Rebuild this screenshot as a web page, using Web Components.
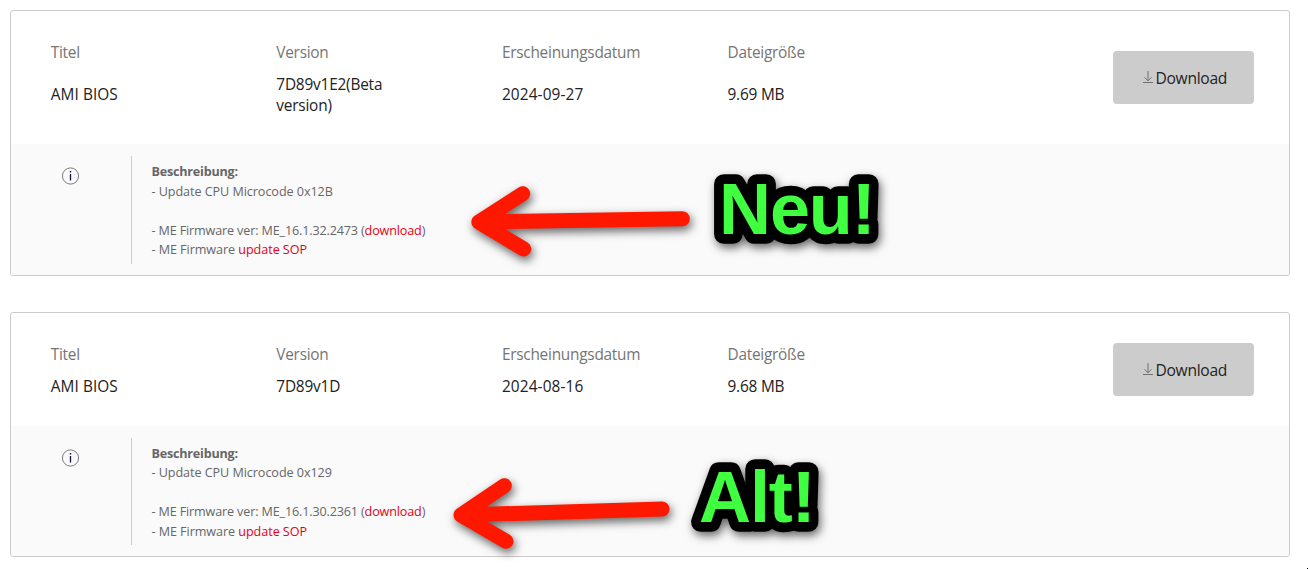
<!DOCTYPE html>
<html lang="de">
  <head>
    <meta charset="UTF-8" />
    <meta name="viewport" content="width=device-width, initial-scale=1.0" />
    <title>BIOS Downloads</title>
    <style>
      body {
        margin: 0;
        height: 569px;
        position: relative;
        overflow: hidden;
        background: #fff;
        font-family: "Open Sans", "Noto Sans", sans-serif;
      }
      bios-field[label="Titel"] {
        --value-track: 0.08px;
      }
      bios-field[label="Version"] {
        --value-track: -0.2px;
      }
      bios-field[label="Erscheinungsdatum"] {
        --value-track: 0.12px;
      }
      bios-field[label="Dateigröße"] {
        --value-track: -0.2px;
      }
    </style>
  </head>
  <body>
    <template id="tpl-list">
      <style>
        :host {
          display: flex;
          flex-direction: column;
          gap: 36px;
          padding: 10px 18px 0 10px;
        }
      </style>
      <slot></slot>
    </template>

    <template id="tpl-card">
      <style>
        :host {
          display: block;
          border: 1px solid #ccc;
          border-radius: 3px;
          overflow: hidden;
        }
        .head {
          display: flex;
          align-items: center;
          justify-content: space-between;
          height: var(--head-height, 113px);
          padding-right: 35px;
        }
        .fields {
          display: grid;
          grid-template-columns: repeat(4, 225.6px);
          align-self: flex-start;
          padding: 31px 0 0 39.7px;
        }
        .body {
          display: flex;
          align-items: flex-start;
          height: var(--body-height, 130px);
          box-sizing: border-box;
          padding: 12px 40px 11px;
          background: #fafafa;
        }
        .body svg {
          width: 18px;
          height: 18px;
          margin: 11px 51px 0 10.5px;
        }
        .note {
          align-self: stretch;
          border-left: 1px solid #ccc;
          padding: var(--note-top, 5.7px) 0 0 20px;
          font-size: 12.6px;
          line-height: 19.5px;
          color: #666;
        }
      </style>
      <div class="head">
        <div class="fields"><slot name="field"></slot></div>
        <download-button>Download</download-button>
      </div>
      <div class="body">
        <svg viewBox="0 0 18 18" fill="none">
          <circle cx="8.5" cy="9" r="8.1" stroke="#6b6b74" stroke-width="0.9" />
          <path d="M8.5 7V13.4" stroke="#10104a" stroke-width="1.3" />
          <path d="M8.5 4V5.4" stroke="#10104a" stroke-width="1.4" />
        </svg>
        <div class="note"><slot></slot></div>
      </div>
    </template>

    <template id="tpl-field">
      <style>
        :host {
          display: flex;
          flex-direction: column;
          gap: 10.8px;
          font-size: 15.4px;
          line-height: 21px;
        }
        .label {
          color: #757575;
          letter-spacing: -0.25px;
        }
        .value {
          flex: 1;
          display: flex;
          align-items: center;
          width: 130px;
          color: #222;
          letter-spacing: var(--value-track, 0);
        }
      </style>
      <div class="label"></div>
      <div class="value"><div><slot></slot></div></div>
    </template>

    <template id="tpl-line">
      <style>
        :host {
          display: block;
          min-height: 19.5px;
          white-space: nowrap;
          letter-spacing: -0.06px;
        }
        :host([strong]) {
          font-weight: 700;
          letter-spacing: -0.22px;
        }
        :host([long]) {
          letter-spacing: -0.145px;
        }
        ::slotted(a) {
          color: #e60012;
          text-decoration: none;
        }
      </style>
      <slot></slot>
    </template>

    <template id="tpl-button">
      <style>
        :host {
          display: block;
        }
        button {
          display: flex;
          align-items: center;
          justify-content: center;
          gap: 3px;
          box-sizing: border-box;
          width: 141px;
          height: 53px;
          padding: 1px 0 0 2.5px;
          border: none;
          border-radius: 4px;
          background: #ccc;
          color: #222;
          font: 15.6px/21px "Open Sans", "Noto Sans", sans-serif;
          letter-spacing: -0.3px;
        }
        svg {
          width: 10px;
          height: 12px;
          margin-bottom: 3px;
        }
      </style>
      <button>
        <svg viewBox="0 0 10 12" fill="none" stroke="#66666b" stroke-width="0.9">
          <path d="M5 0V10M1.5 6.3L5 9.8L8.5 6.3M0 11.5H10" />
        </svg>
        <span><slot></slot></span>
      </button>
    </template>

    <template id="tpl-marker">
      <style>
        :host {
          position: absolute;
          inset: 0;
          pointer-events: none;
        }
        svg {
          display: block;
          filter: drop-shadow(2px 4px 5px rgba(0, 0, 0, 0.6));
        }
        path {
          fill: none;
          stroke: #ff1800;
          stroke-width: 15;
          stroke-linecap: round;
          stroke-linejoin: round;
        }
        text {
          font: bold 72px "Liberation Sans", Arial, sans-serif;
          letter-spacing: -1.1px;
          fill: #40ff40;
          stroke: #000;
          stroke-width: 19.5;
          stroke-linejoin: round;
          paint-order: stroke;
        }
      </style>
      <svg width="1308" height="569" viewBox="0 0 1308 569">
        <path />
        <text></text>
      </svg>
    </template>

    <template id="tpl-dot">
      <style>
        :host {
          position: absolute;
          right: 0;
          bottom: 0;
          width: 1px;
          height: 1px;
          background: #000;
        }
      </style>
    </template>

    <bios-list>
      <bios-card style="--head-height: 133px; --body-height: 131px; --note-top: 6px">
        <bios-field slot="field" label="Titel">AMI BIOS</bios-field>
        <bios-field slot="field" label="Version">7D89v1E2(Beta version)</bios-field>
        <bios-field slot="field" label="Erscheinungsdatum">2024-09-27</bios-field>
        <bios-field slot="field" label="Dateigröße">9.69 MB</bios-field>
        <note-line strong>Beschreibung:</note-line>
        <note-line>- Update CPU Microcode 0x12B</note-line>
        <note-line></note-line>
        <note-line long>- ME Firmware ver: ME_16.1.32.2473 (<a href="#">download</a>)</note-line>
        <note-line>- ME Firmware <a href="#">update SOP</a></note-line>
      </bios-card>
      <bios-card>
        <bios-field slot="field" label="Titel">AMI BIOS</bios-field>
        <bios-field slot="field" label="Version">7D89v1D</bios-field>
        <bios-field slot="field" label="Erscheinungsdatum">2024-08-16</bios-field>
        <bios-field slot="field" label="Dateigröße">9.68 MB</bios-field>
        <note-line strong>Beschreibung:</note-line>
        <note-line>- Update CPU Microcode 0x129</note-line>
        <note-line></note-line>
        <note-line long>- ME Firmware ver: ME_16.1.30.2361 (<a href="#">download</a>)</note-line>
        <note-line>- ME Firmware <a href="#">update SOP</a></note-line>
      </bios-card>
    </bios-list>
    <arrow-marker
      arrow="M682.3 218.7L478.8 222M522.7 193.7L478.8 222L523.7 249"
      x="719"
      y="234"
      text="Neu!"
    ></arrow-marker>
    <arrow-marker
      arrow="M662 509L461 515M504.3 485.7L461 515L506 541.3"
      x="699"
      y="522"
      text="Alt!"
    ></arrow-marker>
    <corner-dot></corner-dot>

    <script>
      class TplElement extends HTMLElement {
        constructor() {
          super();
          const tpl = document.getElementById(this.constructor.tpl);
          this.attachShadow({ mode: "open" }).appendChild(
            tpl.content.cloneNode(true)
          );
        }
      }

      customElements.define(
        "download-button",
        class extends TplElement {
          static tpl = "tpl-button";
        }
      );
      customElements.define(
        "bios-list",
        class extends TplElement {
          static tpl = "tpl-list";
        }
      );
      customElements.define(
        "bios-card",
        class extends TplElement {
          static tpl = "tpl-card";
        }
      );
      customElements.define(
        "note-line",
        class extends TplElement {
          static tpl = "tpl-line";
        }
      );
      customElements.define(
        "corner-dot",
        class extends TplElement {
          static tpl = "tpl-dot";
        }
      );

      customElements.define(
        "bios-field",
        class extends TplElement {
          static tpl = "tpl-field";

          connectedCallback() {
            this.shadowRoot.querySelector(".label").textContent =
              this.getAttribute("label");
          }
        }
      );

      // red arrow with an outlined word next to it
      customElements.define(
        "arrow-marker",
        class extends TplElement {
          static tpl = "tpl-marker";

          connectedCallback() {
            const path = this.shadowRoot.querySelector("path");
            const text = this.shadowRoot.querySelector("text");
            path.setAttribute("d", this.getAttribute("arrow"));
            text.setAttribute("x", this.getAttribute("x"));
            text.setAttribute("y", this.getAttribute("y"));
            text.textContent = this.getAttribute("text");
          }
        }
      );
    </script>
  </body>
</html>
